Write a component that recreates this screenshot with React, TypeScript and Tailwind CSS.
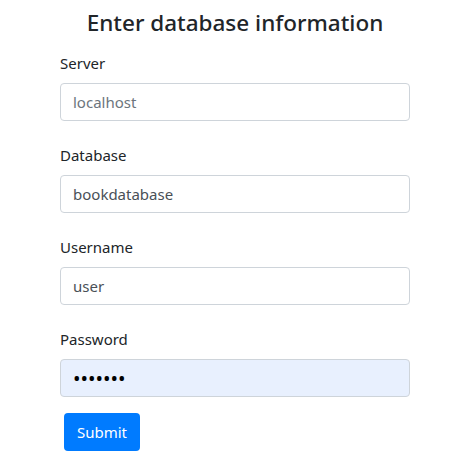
const fields = [
  { label: "Server", value: "", placeholder: "localhost", type: "text" },
  { label: "Database", value: "bookdatabase", placeholder: "", type: "text" },
  { label: "Username", value: "user", placeholder: "", type: "text" },
  { label: "Password", value: "1234567", placeholder: "", type: "password" },
];

export default function App() {
  return (
    <div className="min-h-screen bg-white font-['Noto_Sans',sans-serif] text-[#212529]">
      <div className="ml-[60px] w-[350px] pt-[8px]">
        <h1 className="mb-[14px] text-center text-[22.5px] font-medium leading-[29px]">
          Enter database information
        </h1>
        {fields.map((f, i) => (
          <div key={f.label} className={i === fields.length - 1 ? "mb-[16px]" : "mb-[22px]"}>
            <label className="mb-[8px] block text-[15px] leading-[24px]">{f.label}</label>
            <input
              type={f.type}
              defaultValue={f.value}
              placeholder={f.placeholder}
              className={`block h-[38px] w-full rounded-[4px] border border-[#ced4da] px-[12px] outline-none placeholder:text-[#6c757d] ${
                f.type === "password"
                  ? "bg-[#e8f0fe] text-[20px] text-black"
                  : "bg-white text-[15px] text-[#495057]"
              }`}
            />
          </div>
        ))}
        <button className="ml-[4px] h-[38px] w-[76px] rounded-[4px] bg-[#007bff] text-[15px] text-white">
          Submit
        </button>
      </div>
    </div>
  );
}
